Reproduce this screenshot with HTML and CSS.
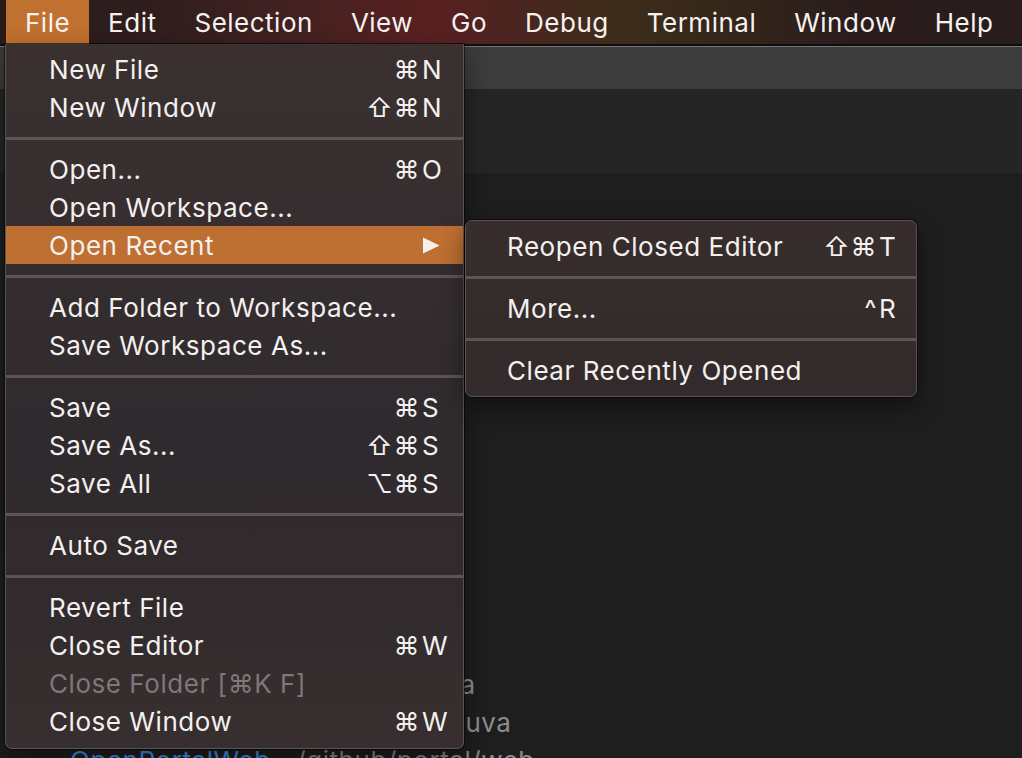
FILE: index.html
```html
<!DOCTYPE html>
<html lang="en">
<head>
<meta charset="utf-8">
<title>File menu</title>
<link rel="stylesheet" href="styles.css">
</head>
<body>
<div class="screen">
  <header class="menubar">
    <span class="mb-item active">File</span>
    <span class="mb-item">Edit</span>
    <span class="mb-item">Selection</span>
    <span class="mb-item">View</span>
    <span class="mb-item">Go</span>
    <span class="mb-item">Debug</span>
    <span class="mb-item">Terminal</span>
    <span class="mb-item">Window</span>
    <span class="mb-item">Help</span>
  </header>

  <main class="workbench">
    <div class="topline"></div>
    <div class="titlebar"></div>
    <div class="tabbar"></div>
    <div class="editor">
      <div class="recent">
        <div class="recent-line"><span class="rname">OpenPortalApp</span> <span class="rpath">~/github/ui/java</span></div>
        <div class="recent-line"><span class="rname">OpenPortalCore</span> <span class="rpath">~/github/src/kuva</span></div>
        <div class="recent-line"><span class="rname">OpenPortalWeb</span> <span class="rpath">~/github/portal/web</span></div>
      </div>
    </div>
  </main>

  <div class="menu main-menu">
    <div class="row"><span class="label">New File</span><span class="mods">⌘</span><span class="key">N</span></div>
    <div class="row"><span class="label">New Window</span><span class="mods">⇧⌘</span><span class="key">N</span></div>
    <div class="sep"></div>
    <div class="row"><span class="label">Open...</span><span class="mods">⌘</span><span class="key">O</span></div>
    <div class="row"><span class="label">Open Workspace...</span><span class="mods"></span><span class="key"></span></div>
    <div class="row selected"><span class="label">Open Recent</span><span class="mods"></span><span class="key"><svg class="arrow" width="18" height="17" viewBox="0 0 18 17"><path d="M1 0.5 L17.5 8.5 L1 16.5 Z" fill="#f4f0ee"/></svg></span></div>
    <div class="sep"></div>
    <div class="row"><span class="label">Add Folder to Workspace...</span><span class="mods"></span><span class="key"></span></div>
    <div class="row"><span class="label">Save Workspace As...</span><span class="mods"></span><span class="key"></span></div>
    <div class="sep"></div>
    <div class="row"><span class="label">Save</span><span class="mods">⌘</span><span class="key">S</span></div>
    <div class="row"><span class="label">Save As...</span><span class="mods">⇧⌘</span><span class="key">S</span></div>
    <div class="row"><span class="label">Save All</span><span class="mods">⌥⌘</span><span class="key">S</span></div>
    <div class="sep"></div>
    <div class="row"><span class="label">Auto Save</span><span class="mods"></span><span class="key"></span></div>
    <div class="sep"></div>
    <div class="row"><span class="label">Revert File</span><span class="mods"></span><span class="key"></span></div>
    <div class="row"><span class="label">Close Editor</span><span class="mods">⌘</span><span class="key">W</span></div>
    <div class="row disabled"><span class="label">Close Folder [⌘K F]</span><span class="mods"></span><span class="key"></span></div>
    <div class="row"><span class="label">Close Window</span><span class="mods">⌘</span><span class="key">W</span></div>
  </div>

  <div class="menu submenu">
    <div class="row"><span class="label">Reopen Closed Editor</span><span class="mods">⇧⌘</span><span class="key">T</span></div>
    <div class="sep"></div>
    <div class="row"><span class="label">More...</span><span class="mods">^ </span><span class="key">R</span></div>
    <div class="sep"></div>
    <div class="row"><span class="label">Clear Recently Opened</span><span class="mods"></span><span class="key"></span></div>
  </div>
</div>
</body>
</html>
```

FILE: styles.css
```css
* { box-sizing: border-box; }

html, body {
  margin: 0;
  padding: 0;
  width: 1022px;
  height: 758px;
  overflow: hidden;
  background: #1e1e1e;
  font-family: Inter, "Noto Sans", "DejaVu Sans", sans-serif;
}

.screen {
  position: relative;
  width: 1022px;
  height: 758px;
  display: flex;
  flex-direction: column;
  overflow: hidden;
}

/* ---------- menu bar ---------- */
.menubar {
  height: 44px;
  flex: none;
  display: flex;
  align-items: stretch;
  padding-left: 6px;
  background: linear-gradient(90deg,
    #2a1b1b 0%, #301e1e 15%, #452121 30%, #5a2020 42%,
    #4b2520 50%, #3e2d1b 60%, #352719 70%, #2b1d1c 83%, #281c1c 100%);
}

.mb-item {
  padding: 1px 19px 0;
  line-height: 43px;
  font-size: 26px;
  color: #f6f2f0;
  letter-spacing: 0.5px;
}

.mb-item.active {
  background: #c0702f;
}

/* ---------- workbench ---------- */
.workbench {
  flex: 1;
  display: flex;
  flex-direction: column;
}

.topline {
  height: 3px;
  flex: none;
  background: #0e0c0c;
  border-bottom: 1px solid #767676;
}

.titlebar {
  height: 42px;
  flex: none;
  background: #3c3c3c;
}

.tabbar {
  height: 84px;
  flex: none;
  background: #252526;
}

.editor {
  flex: 1;
  background: #1e1e1e;
  padding: 493px 0 0 70px;
}

.recent-line {
  height: 38px;
  line-height: 38px;
  font-size: 26px;
  letter-spacing: 0.55px;
  white-space: nowrap;
}

.rname { color: #3d8fe6; }
.rpath { color: #8c8c8c; }

/* ---------- menus ---------- */
.menu {
  position: absolute;
  color: #f4f0ee;
  font-size: 26px;
  letter-spacing: 0.55px;
  border: 1px solid #5c5353;
  box-shadow: 0 0 0 1px rgba(0, 0, 0, 0.55), 0 10px 24px rgba(0, 0, 0, 0.45);
}

.main-menu {
  left: 5px;
  top: 44px;
  width: 459px;
  height: 705px;
  padding: 6px 0 7px;
  border-top: none;
  border-radius: 0 0 7px 7px;
  background: linear-gradient(180deg, #3a3030 0%, #342d2f 35%, #2f2a2e 55%, #322b2d 80%, #372f2f 100%);
}

.submenu {
  left: 465px;
  top: 220px;
  width: 452px;
  height: 177px;
  padding: 6px 0 7px;
  border-radius: 7px;
  background: linear-gradient(180deg, #362d2c 0%, #332b2b 100%);
}

.row {
  height: 38px;
  display: flex;
  align-items: center;
  padding-top: 1px;
  padding-left: 43px;
  white-space: nowrap;
}

.main-menu .row { padding-right: 8px; }
.submenu .row { padding-left: 41px; padding-right: 4px; }

.row .label { flex: 1; }

.row .mods {
  text-align: right;
  padding-right: 2px;
}

.row .key {
  width: 33px;
  display: flex;
  align-items: center;
}

.submenu .row .key { width: 33px; }

.row.selected {
  background: #be6f32;
}

.row.disabled {
  color: #7e7878;
}

.arrow { display: block; margin-top: -1px; }

.sep {
  height: 3px;
  margin: 10.5px 0;
  background: #5d5555;
}
```
